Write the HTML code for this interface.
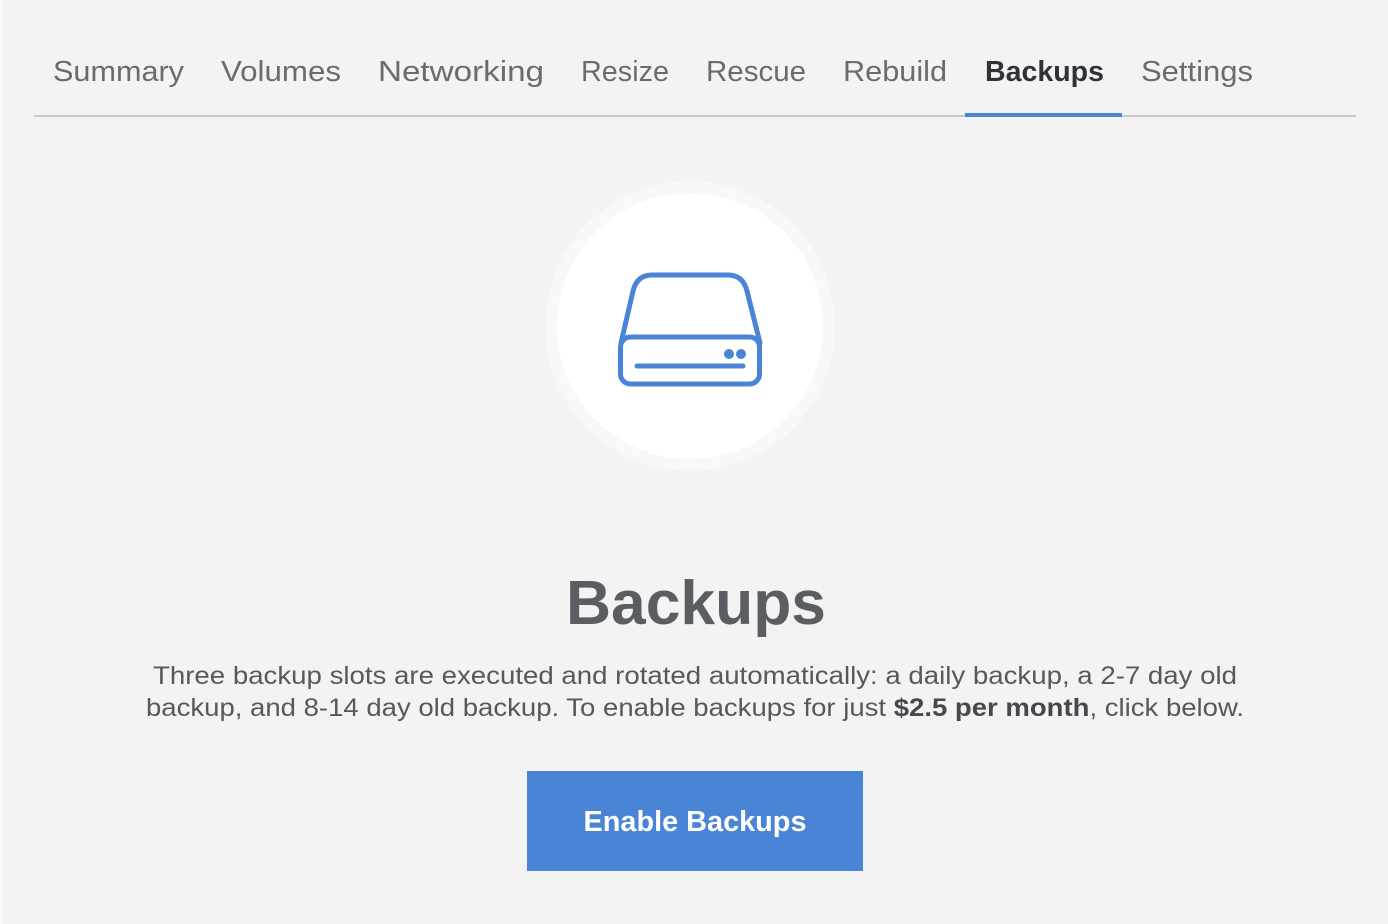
<!DOCTYPE html>
<html><head><meta charset="utf-8"><style>
html,body{margin:0;padding:0;background:#f3f3f3;}
svg{display:block}
text{font-family:"Liberation Sans",sans-serif;}
</style></head><body>
<svg width="1388" height="924" viewBox="0 0 1388 924" xmlns="http://www.w3.org/2000/svg">
<rect width="1388" height="924" fill="#f3f3f3"/>
<rect x="0" y="0" width="2" height="924" fill="#fafafa"/>
<g font-size="29" fill="#6b6b6b">
<text x="53" y="81" textLength="131" lengthAdjust="spacingAndGlyphs">Summary</text>
<text x="221" y="81" textLength="120" lengthAdjust="spacingAndGlyphs">Volumes</text>
<text x="378" y="81" textLength="166" lengthAdjust="spacingAndGlyphs">Networking</text>
<text x="581" y="81" textLength="88" lengthAdjust="spacingAndGlyphs">Resize</text>
<text x="706" y="81" textLength="100" lengthAdjust="spacingAndGlyphs">Rescue</text>
<text x="843" y="81" textLength="104" lengthAdjust="spacingAndGlyphs">Rebuild</text>
<text x="985" y="81" textLength="119" lengthAdjust="spacingAndGlyphs" fill="#2f3338" font-weight="bold">Backups</text>
<text x="1141" y="81" textLength="112" lengthAdjust="spacingAndGlyphs">Settings</text>
</g>
<rect x="34" y="115" width="1322" height="2" fill="#c8c8c8"/>
<rect x="965" y="113" width="157" height="4" fill="#4a84d6"/>
<circle cx="690" cy="326" r="145" fill="#f8f8f8"/>
<circle cx="690" cy="326" r="133" fill="#ffffff"/>
<g fill="none" stroke="#4a84d6" stroke-width="5" stroke-linecap="round" stroke-linejoin="round">
<path d="M621 343 L633 291 Q637 275 652 275 L728 275 Q743 275 747 291 L760 343"/>
<rect x="620.5" y="337" width="139" height="47" rx="10"/>
<line x1="637" y1="366" x2="743" y2="366"/>
</g>
<circle cx="729" cy="354" r="5" fill="#4a84d6"/>
<circle cx="741" cy="354" r="5" fill="#4a84d6"/>
<text x="696" y="624" font-size="62" font-weight="bold" fill="#5a5d62" text-anchor="middle" textLength="260" lengthAdjust="spacingAndGlyphs">Backups</text>
<g font-size="25" fill="#55585d">
<text x="153" y="684" textLength="1084" lengthAdjust="spacingAndGlyphs">Three backup slots are executed and rotated automatically: a daily backup, a 2-7 day old</text>
<text x="146" y="716" textLength="1098" lengthAdjust="spacingAndGlyphs">backup, and 8-14 day old backup. To enable backups for just <tspan font-weight="bold" fill="#45484d">$2.5 per month</tspan>, click below.</text>
</g>
<rect x="527" y="771" width="336" height="100" fill="#4a84d6"/>
<text x="695" y="831" font-size="29" font-weight="bold" fill="#ffffff" text-anchor="middle" textLength="223" lengthAdjust="spacingAndGlyphs">Enable Backups</text>
</svg>
</body></html>
